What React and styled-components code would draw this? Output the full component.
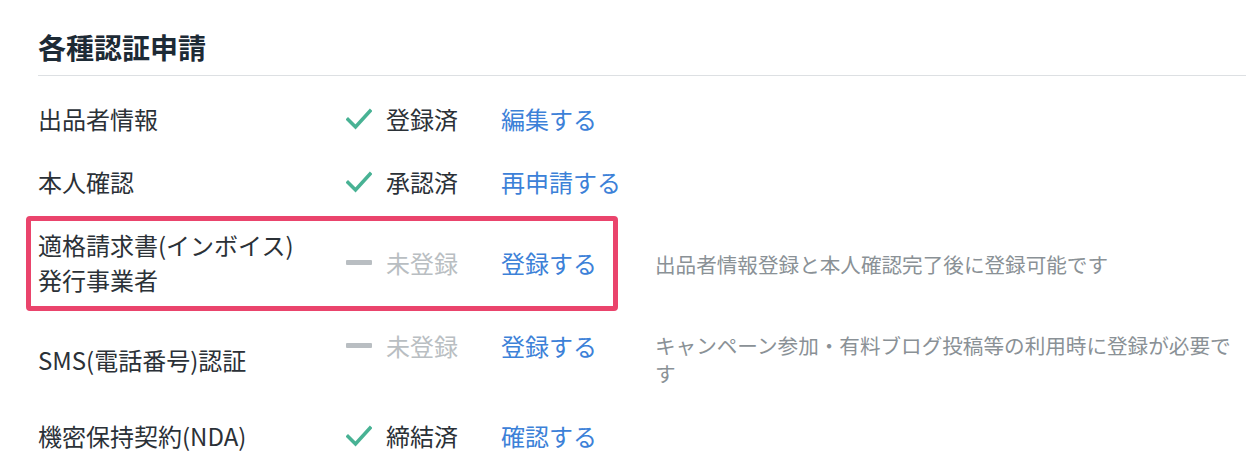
import React from "react";
import styled, { createGlobalStyle } from "styled-components";

const Global = createGlobalStyle`
  html, body { margin: 0; padding: 0; background: #fff; }
  body { font-family: "Noto Sans CJK JP", "Noto Sans", sans-serif; color: #2b3137; }
`;

const Page = styled.div`
  padding: 27px 0 0 38px;
`;

const Title = styled.h2`
  margin: 0;
  font-size: 28px;
  line-height: 40px;
  font-weight: 700;
  color: #1d2a35;
`;

const Divider = styled.hr`
  margin: 8px 0 0 0;
  border: none;
  border-top: 1.5px solid #dde0e3;
`;

const List = styled.div`
  display: flex;
  flex-direction: column;
  gap: 6px;
  margin: 14px 0 0 -12px;
`;

const Row = styled.div`
  display: flex;
  align-items: center;
`;

const Box = styled.div`
  box-sizing: border-box;
  align-self: stretch;
  width: 592px;
  flex: none;
  display: grid;
  grid-template-columns: 308px 155px 1fr;
  align-items: center;
  padding: 6px 7px ${(p) => (p.$highlight ? 9 : 6)}px;
  border: 5px solid ${(p) => (p.$highlight ? "#ea446c" : "transparent")};
  border-radius: 4px;
`;

const Label = styled.div`
  font-size: 24px;
  line-height: 35px;
  color: #2b3137;
  white-space: nowrap;
`;

const Status = styled.div`
  display: flex;
  align-items: center;
  gap: 14px;
  font-size: 24px;
  line-height: 35px;
  white-space: nowrap;
  color: ${(p) => (p.$done ? "#2b3137" : "#b9bec2")};
  align-self: ${(p) => (p.$top ? "start" : "center")};
`;

const Link = styled.a`
  font-size: 24px;
  line-height: 35px;
  white-space: nowrap;
  color: #3c81d8;
  text-decoration: none;
  cursor: pointer;
  align-self: ${(p) => (p.$top ? "start" : "center")};
`;

const Desc = styled.div`
  margin-left: 37px;
  width: 590px;
  padding: 14px 0;
  font-size: 20.6px;
  line-height: 28px;
  color: #8a9196;
`;

const Dash = styled.span`
  display: inline-block;
  width: 26px;
  height: 5px;
  border-radius: 1px;
  background: #b9bec2;
`;

const Check = () => (
  <svg width="26" height="22" viewBox="0 0 26 22" aria-hidden="true">
    <path d="M2 11.5 L9.5 19 L24 3" fill="none" stroke="#48b294" strokeWidth="3.6" strokeLinecap="square" strokeLinejoin="miter" />
  </svg>
);

const rows = [
  { label: "出品者情報", done: true, status: "登録済", link: "編集する" },
  { label: "本人確認", done: true, status: "承認済", link: "再申請する" },
  {
    label: ["適格請求書(インボイス)", "発行事業者"],
    done: false,
    status: "未登録",
    link: "登録する",
    highlight: true,
    desc: "出品者情報登録と本人確認完了後に登録可能です",
  },
  {
    label: "SMS(電話番号)認証",
    done: false,
    status: "未登録",
    link: "登録する",
    top: true,
    desc: "キャンペーン参加・有料ブログ投稿等の利用時に登録が必要です",
  },
  { label: "機密保持契約(NDA)", done: true, status: "締結済", link: "確認する" },
];

export default function App() {
  return (
    <Page>
      <Global />
      <Title>各種認証申請</Title>
      <Divider />
      <List>
        {rows.map((r, i) => (
          <Row key={i}>
            <Box $highlight={r.highlight}>
              <Label>
                {Array.isArray(r.label)
                  ? r.label.map((l, j) => <div key={j}>{l}</div>)
                  : r.label}
              </Label>
              <Status $done={r.done} $top={r.top}>
                {r.done ? <Check /> : <Dash />}
                {r.status}
              </Status>
              <Link $top={r.top}>{r.link}</Link>
            </Box>
            {r.desc && <Desc>{r.desc}</Desc>}
          </Row>
        ))}
      </List>
    </Page>
  );
}
